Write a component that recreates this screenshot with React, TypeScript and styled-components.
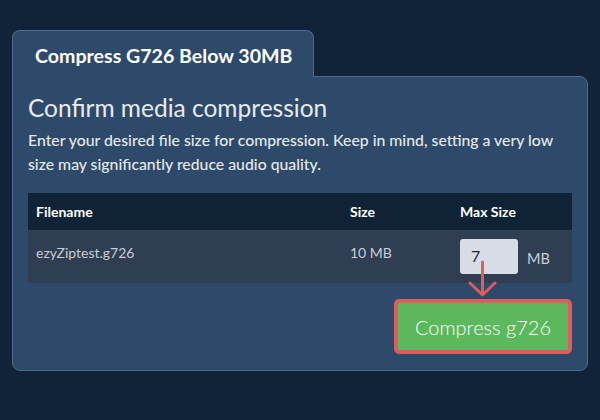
import React from "react";
import styled, { createGlobalStyle } from "styled-components";

const Global = createGlobalStyle`
  html, body { margin: 0; padding: 0; background: #112339; }
  body { font-family: Lato, "Noto Sans", sans-serif; width: 600px; height: 420px; overflow: hidden; }
`;

const Page = styled.div`
  padding: 30px 12px 0 12px;
  display: flex;
  flex-direction: column;
  align-items: flex-start;
`;

const Tab = styled.div`
  position: relative;
  z-index: 1;
  box-sizing: border-box;
  width: 302px;
  height: 47px;
  margin-bottom: -1px;
  background: #2d4a6b;
  border: 1px solid #4b6a8e;
  border-bottom: none;
  border-radius: 8px 8px 0 0;
  display: flex;
  align-items: center;
  padding-left: 22px;
  padding-top: 3px;
  color: #ffffff;
  font-weight: 700;
  font-size: 19.6px;
`;

const Panel = styled.div`
  box-sizing: border-box;
  width: 576px;
  height: 295px;
  background: #2d4a6b;
  border: 1px solid #4b6a8e;
  border-radius: 0 8px 8px 8px;
  padding: 15px 15px 0 15px;
  display: flex;
  flex-direction: column;
`;

const Heading = styled.h2`
  margin: 0;
  font-size: 24.5px;
  font-weight: 400;
  color: #e8ebef;
  line-height: 32px;
`;

const Para = styled.p`
  margin: 4px 0 0 0;
  font-size: 15.8px;
  line-height: 24px;
  font-weight: 500;
  color: #e6e8eb;
`;

const Table = styled.div`
  margin-top: 17px;
  display: flex;
  flex-direction: column;
`;

const Row = styled.div<{ $head?: boolean }>`
  display: grid;
  grid-template-columns: 314px 110px 1fr;
  background: ${(p) => (p.$head ? "#0f2236" : "#2f3e52")};
  height: ${(p) => (p.$head ? "37px" : "53px")};
  box-sizing: border-box;
  padding-left: 8px;
  align-items: ${(p) => (p.$head ? "center" : "start")};
  font-size: 14px;
  font-weight: ${(p) => (p.$head ? 700 : 400)};
  color: ${(p) => (p.$head ? "#ffffff" : "#c9ced6")};
`;

const Cell = styled.div<{ $pt?: number }>`
  padding-top: ${(p) => p.$pt ?? 0}px;
`;

const MaxCell = styled.div`
  display: flex;
  align-items: center;
  gap: 9px;
  padding-top: 9px;
  position: relative;
`;

const Input = styled.div`
  box-sizing: border-box;
  width: 58px;
  height: 35px;
  background: #d8dde5;
  border-radius: 3px;
  padding: 7px 0 0 11px;
  font-size: 16px;
  color: #1f2937;
`;

const Unit = styled.span`
  font-size: 14.5px;
  color: #c9ced6;
  padding-top: 4px;
`;

const Arrow = styled.svg`
  position: absolute;
  left: 9px;
  top: 32px;
  overflow: visible;
`;

const Actions = styled.div`
  display: flex;
  justify-content: flex-end;
  margin-top: 16px;
`;

const Button = styled.button`
  box-sizing: border-box;
  width: 178px;
  height: 55px;
  background: #5cb85c;
  border: 4px solid #e05b5b;
  border-radius: 5px;
  color: #ffffff;
  font-family: Lato, "Noto Sans", sans-serif;
  font-size: 20px;
  font-weight: 300;
  padding: 0;
  cursor: pointer;
`;

export default function App() {
  return (
    <>
      <Global />
      <Page>
        <Tab>Compress G726 Below 30MB</Tab>
        <Panel>
          <Heading>Confirm media compression</Heading>
          <Para>
            Enter your desired file size for compression. Keep in mind, setting a very low size may
            significantly reduce audio quality.
          </Para>
          <Table>
            <Row $head>
              <Cell>Filename</Cell>
              <Cell>Size</Cell>
              <Cell>Max Size</Cell>
            </Row>
            <Row>
              <Cell $pt={14}>ezyZiptest.g726</Cell>
              <Cell $pt={14}>10 MB</Cell>
              <MaxCell>
                <Input>7</Input>
                <Unit>MB</Unit>
                <Arrow width="30" height="36" viewBox="0 0 30 36">
                  <path
                    d="M13.5 0 V32 M1 21 L13.5 33 L26 21"
                    fill="none"
                    stroke="#e05b5b"
                    strokeWidth="3"
                    strokeLinecap="round"
                    strokeLinejoin="round"
                  />
                </Arrow>
              </MaxCell>
            </Row>
          </Table>
          <Actions>
            <Button>Compress g726</Button>
          </Actions>
        </Panel>
      </Page>
    </>
  );
}
